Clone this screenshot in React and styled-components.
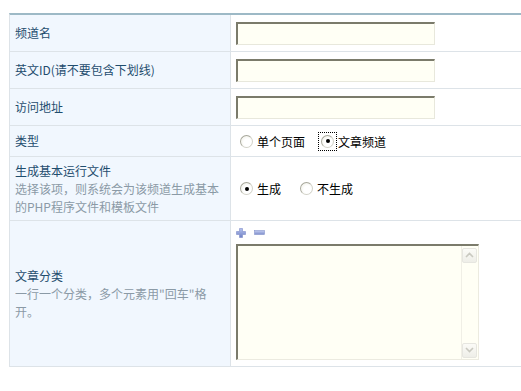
import React, { useState } from 'react';
import styled, { createGlobalStyle } from 'styled-components';

const GlobalStyle = createGlobalStyle`
  body {
    margin: 0;
    background: #ffffff;
    overflow: hidden;
    font-family: "Noto Sans CJK SC", "Liberation Sans", sans-serif;
    font-size: 12px;
  }
`;

const Page = styled.div`
  padding: 13px 0 0 9px;
`;

const Table = styled.div`
  display: grid;
  grid-template-columns: 221px 1fr;
  border-top: 2px solid #9db9c6;
  border-left: 1px solid #dde3e8;
`;

const Label = styled.div`
  background: #f1f7fe;
  border-right: 1px solid #dde3e8;
  border-bottom: 1px solid #dde3e8;
  height: ${(p) => p.$h}px;
  padding: 0 5px;
  display: flex;
  flex-direction: column;
  justify-content: center;
  color: #1f4d6e;
  line-height: 18px;
`;

const Hint = styled.div`
  color: #8b9aa6;
`;

const Field = styled.div`
  border-bottom: 1px solid #dde3e8;
  height: ${(p) => p.$h}px;
  padding: 0 5px;
  display: flex;
  flex-direction: column;
  justify-content: center;
  align-items: flex-start;
`;

const TextInput = styled.input`
  box-sizing: border-box;
  width: 199px;
  height: 23px;
  margin-top: 1px;
  background: #fffff5;
  border-style: solid;
  border-width: 2px 1px 1px 2px;
  border-color: #7b7b6b #e8e8dc #e8e8dc #7b7b6b;
  outline: none;
  font-size: 12px;
`;

const RadioGroup = styled.div`
  display: flex;
  align-items: center;
  gap: ${(p) => p.$gap}px;
  padding-left: ${(p) => p.$indent}px;
  color: #000;
`;

const Option = styled.label`
  display: flex;
  align-items: center;
  gap: 1px;
  cursor: pointer;
`;

const DotBox = styled.span`
  display: flex;
  align-items: center;
  justify-content: center;
  width: 19px;
  height: 19px;
  box-sizing: border-box;
  border: 1px dotted ${(p) => (p.$focus ? '#000' : 'transparent')};
`;

const Dot = styled.span`
  width: 11px;
  height: 11px;
  border-radius: 50%;
  border: 1px solid #d2d2c8;
  border-left-color: #a8a89c;
  border-top-color: #a8a89c;
  background: radial-gradient(circle at 60% 60%, #ffffff 40%, #ebebe0 100%);
  display: flex;
  align-items: center;
  justify-content: center;

  &::after {
    content: '';
    width: 4px;
    height: 4px;
    border-radius: 50%;
    background: ${(p) => (p.$on ? '#000' : 'transparent')};
  }
`;

const Tools = styled.div`
  display: flex;
  align-items: center;
  gap: 8px;
  height: 10px;
  margin: 0 0 6px 0;
`;

const Area = styled.div`
  display: flex;
  width: 243px;
  height: 116px;
  box-sizing: border-box;
  background: #fffff5;
  border-style: solid;
  border-width: 2px 1px 1px 2px;
  border-color: #7b7b6b #ecebe0 #ecebe0 #7b7b6b;
`;

const AreaText = styled.textarea`
  flex: 1;
  border: none;
  background: transparent;
  resize: none;
  outline: none;
  font-size: 12px;
`;

const Scroll = styled.div`
  width: 16px;
  border-left: 1px solid #f0efe6;
  display: flex;
  flex-direction: column;
  justify-content: space-between;
  padding: 2px 0 1px 0;
`;

const ScrollBtn = styled.div`
  width: 15px;
  height: 15px;
  box-sizing: border-box;
  border: 1px solid #e6e6e0;
  border-radius: 2px;
  background: linear-gradient(#fbfbf7, #eeeee8);
  display: flex;
  align-items: center;
  justify-content: center;
`;

const Chevron = ({ up }) => (
  <svg width="9" height="6" viewBox="0 0 9 6">
    <path d={up ? 'M1 5 L4.5 1.5 L8 5' : 'M1 1 L4.5 4.5 L8 1'} fill="none" stroke="#c9c9c0" strokeWidth="1.6" />
  </svg>
);

const PlusIcon = () => (
  <svg width="10" height="10" viewBox="0 0 10 10">
    <defs>
      <linearGradient id="pg" x1="0" y1="0" x2="0" y2="1">
        <stop offset="0" stopColor="#b6c3ef" />
        <stop offset="1" stopColor="#6f80c4" />
      </linearGradient>
    </defs>
    <path d="M3.5 0.5 H6.5 V3.5 H9.5 V6.5 H6.5 V9.5 H3.5 V6.5 H0.5 V3.5 H3.5 Z" fill="url(#pg)" stroke="#7d8cc8" strokeWidth="0.6" />
  </svg>
);

const MinusIcon = () => (
  <svg width="11" height="5" viewBox="0 0 11 5">
    <defs>
      <linearGradient id="mg" x1="0" y1="0" x2="0" y2="1">
        <stop offset="0" stopColor="#c3ccf0" />
        <stop offset="1" stopColor="#7e8ecc" />
      </linearGradient>
    </defs>
    <rect x="0.5" y="0.5" width="10" height="4" fill="url(#mg)" stroke="#8594cc" strokeWidth="0.6" />
  </svg>
);

const Radio = ({ on, focus, onClick, children }) => (
  <Option onClick={onClick}>
    <DotBox $focus={focus}>
      <Dot $on={on} />
    </DotBox>
    {children}
  </Option>
);

export default function App() {
  const [type, setType] = useState('channel');
  const [gen, setGen] = useState(true);

  return (
    <Page>
      <GlobalStyle />
      <Table>
        <Label $h={36}>频道名</Label>
        <Field $h={36}><TextInput /></Field>

        <Label $h={36}>英文ID(请不要包含下划线)</Label>
        <Field $h={36}><TextInput /></Field>

        <Label $h={36}>访问地址</Label>
        <Field $h={36}><TextInput /></Field>

        <Label $h={30}>类型</Label>
        <Field $h={30}>
          <RadioGroup $gap={13} $indent={1}>
            <Radio on={type === 'page'} onClick={() => setType('page')}>单个页面</Radio>
            <Radio on={type === 'channel'} focus onClick={() => setType('channel')}>文章频道</Radio>
          </RadioGroup>
        </Field>

        <Label $h={63}>
          生成基本运行文件
          <Hint>选择该项，则系统会为该频道生成基本的PHP程序文件和模板文件</Hint>
        </Label>
        <Field $h={63}>
          <RadioGroup $gap={16} $indent={1}>
            <Radio on={gen} onClick={() => setGen(true)}>生成</Radio>
            <Radio on={!gen} onClick={() => setGen(false)}>不生成</Radio>
          </RadioGroup>
        </Field>

        <Label $h={145}>
          文章分类
          <Hint>一行一个分类，多个元素用"回车"格开。</Hint>
        </Label>
        <Field $h={145}>
          <Tools>
            <PlusIcon />
            <MinusIcon />
          </Tools>
          <Area>
            <AreaText />
            <Scroll>
              <ScrollBtn><Chevron up /></ScrollBtn>
              <ScrollBtn><Chevron /></ScrollBtn>
            </Scroll>
          </Area>
        </Field>
      </Table>
    </Page>
  );
}
